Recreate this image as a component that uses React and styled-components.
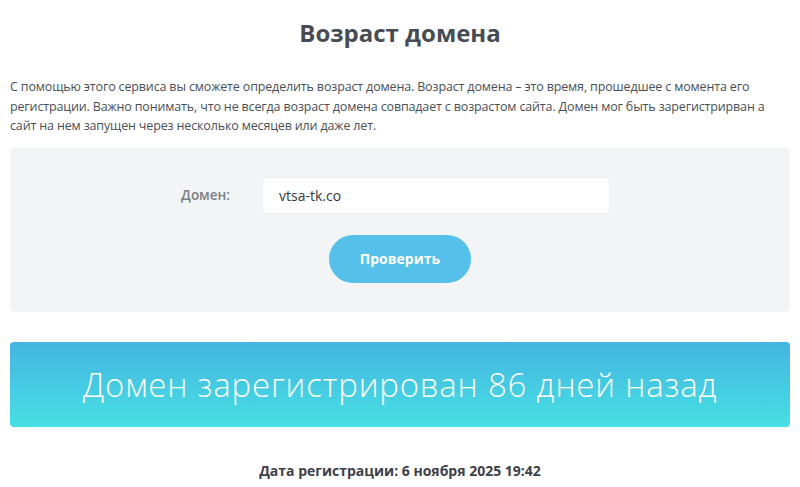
import React from 'react'
import styled, { createGlobalStyle } from 'styled-components'

const GlobalStyle = createGlobalStyle`
  body {
    margin: 0;
    background: #fff;
    font-family: "Open Sans", "DejaVu Sans", sans-serif;
    color: #4a4f57;
  }
`

const Page = styled.div`
  padding: 0 10px;
`

const Title = styled.h1`
  margin: 0;
  padding-top: 16px;
  height: 33px;
  text-align: center;
  font-size: 24px;
  font-weight: 700;
  color: #474c54;
`

const Intro = styled.p`
  margin: 28px 0 0;
  font-size: 12.5px;
  letter-spacing: -0.15px;
  line-height: 19.5px;
  color: #4a4f57;
`

const FormPanel = styled.div`
  margin-top: 12px;
  background: #f3f4f6;
  border-radius: 4px;
  padding: 29px 0 29px;
  display: flex;
  flex-direction: column;
  align-items: center;
  gap: 21px;
`

const Row = styled.div`
  display: flex;
  align-items: center;
  width: 100%;
`

const Label = styled.label`
  width: 252px;
  padding-right: 32px;
  text-align: right;
  box-sizing: border-box;
  font-size: 13.5px;
  font-weight: 600;
  color: #7b7f86;
`

const Input = styled.input`
  width: 348px;
  height: 37px;
  box-sizing: border-box;
  border: 1px solid #eceef1;
  border-radius: 2px;
  background: #fff;
  padding: 0 16px;
  font-family: inherit;
  font-size: 14px;
  font-weight: 500;
  color: #33373d;
  outline: none;
`

const Button = styled.button`
  width: 142px;
  height: 48px;
  border: none;
  border-radius: 24px;
  background: #55c1ea;
  color: #fff;
  font-family: inherit;
  font-size: 14px;
  font-weight: 700;
  cursor: pointer;
`

const Result = styled.div`
  margin-top: 30px;
  height: 85px;
  border-radius: 4px;
  background: linear-gradient(to bottom, #44b4e0, #47e0e4);
  display: flex;
  align-items: center;
  justify-content: center;
  color: #fff;
  font-size: 33px;
  font-weight: 300;
  letter-spacing: 0.8px;
`

const RegDate = styled.div`
  margin-top: 34px;
  text-align: center;
  font-size: 14px;
  font-weight: 700;
  color: #3d4148;
`

const App = () => {
  return (
    <Page>
      <GlobalStyle />
      <Title>Возраст домена</Title>
      <Intro>
        С помощью этого сервиса вы сможете определить возраст домена. Возраст домена – это время, прошедшее с момента его
        регистрации. Важно понимать, что не всегда возраст домена совпадает с возрастом сайта. Домен мог быть зарегистрирван а
        сайт на нем запущен через несколько месяцев или даже лет.
      </Intro>
      <FormPanel>
        <Row>
          <Label>Домен:</Label>
          <Input defaultValue="vtsa-tk.co" />
        </Row>
        <Button>Проверить</Button>
      </FormPanel>
      <Result>Домен зарегистрирован 86 дней назад</Result>
      <RegDate>Дата регистрации: 6 ноября 2025 19:42</RegDate>
    </Page>
  )
}

export default App
